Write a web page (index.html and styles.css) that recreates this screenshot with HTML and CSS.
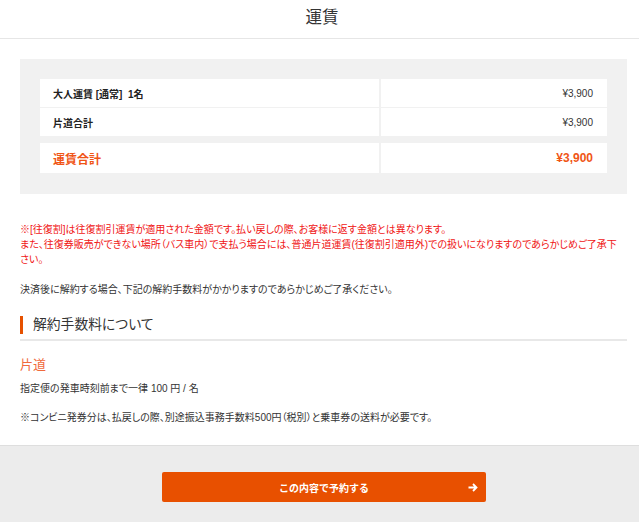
FILE: index.html
```html
<!DOCTYPE html>
<html lang="ja">
<head>
<meta charset="utf-8">
<title>運賃</title>
<link rel="stylesheet" href="styles.css">
</head>
<body>
<header class="page-header">
  <h1 class="page-title">運賃</h1>
</header>
<main class="content">
  <div class="fare-box">
    <div class="fare-group">
      <div class="fare-row">
        <div class="cell label">大人運賃 [通常]&nbsp; 1名</div>
        <div class="cell amount">¥3,900</div>
      </div>
      <div class="fare-row">
        <div class="cell label">片道合計</div>
        <div class="cell amount">¥3,900</div>
      </div>
    </div>
    <div class="fare-group total">
      <div class="fare-row">
        <div class="cell label">運賃合計</div>
        <div class="cell amount">¥3,900</div>
      </div>
    </div>
  </div>

  <p class="note warn">※[往復割]は往復割引運賃が適用された金額です。払い戻しの際、お客様に返す金額とは異なります。<br>また、往復券販売ができない場所（バス車内）で支払う場合には、普通片道運賃(往復割引適用外)での扱いになりますのであらかじめご了承下さい。</p>
  <p class="note">決済後に解約する場合、下記の解約手数料がかかりますのであらかじめご了承ください。</p>

  <section class="cancel">
    <h2 class="section-title">解約手数料について</h2>
    <h3 class="sub-title">片道</h3>
    <p class="note">指定便の発車時刻前まで一律 100 円 / 名</p>
    <p class="note gap">※コンビニ発券分は、払戻しの際、別途振込事務手数料500円（税別）と乗車券の送料が必要です。</p>
  </section>
</main>
<footer class="action-bar">
  <button class="reserve-btn" type="button">
    <span class="btn-label">この内容で予約する</span>
    <svg class="btn-arrow" width="10" height="9" viewBox="0 0 10 9" aria-hidden="true"><path d="M0.5 4.5H8.5M5 1L8.5 4.5L5 8" fill="none" stroke="#fff" stroke-width="1.8"/></svg>
  </button>
</footer>
</body>
</html>
```

FILE: styles.css
```css
* { box-sizing: border-box; }
html, body { margin: 0; padding: 0; }
body {
  width: 639px;
  height: 522px;
  overflow: hidden;
  background: #fff;
  color: #333;
  font-family: "Liberation Sans", "Noto Sans CJK JP", sans-serif;
  display: flex;
  flex-direction: column;
}
.page-header {
  height: 39px;
  border-bottom: 1px solid #e6e6e6;
  display: flex;
  align-items: center;
  justify-content: center;
  padding-left: 5px;
}
.page-title {
  margin: 0;
  font-size: 16.5px;
  font-weight: normal;
  line-height: 1;
  margin-top: -4px;
  color: #333;
}
.content {
  flex: 1;
  padding: 20px 12px 0 20px;
}
.fare-box {
  background: #f1f1f1;
  padding: 20px 20px 21px;
}
.fare-group {
  display: flex;
  flex-direction: column;
  gap: 1px;
}
.fare-group.total { margin-top: 7px; }
.fare-row {
  display: grid;
  grid-template-columns: 339px 1fr;
  column-gap: 2px;
  height: 28px;
}
.fare-group.total .fare-row { height: 30px; }
.cell {
  background: #fff;
  display: flex;
  align-items: center;
  font-size: 10px;
}
.cell.label {
  padding-left: 13px;
  font-weight: bold;
  color: #222;
}
.cell.amount {
  justify-content: flex-end;
  padding-right: 14px;
  color: #333;
}
.fare-group.total .cell {
  color: #f05516;
  font-size: 12px;
  font-weight: bold;
}
.note {
  margin: 0;
  font-size: 10px;
  line-height: 15px;
  color: #333;
  font-feature-settings: "palt";
}
.note.warn {
  color: #f01414;
  margin-top: 28px;
  margin-bottom: 15px;
  padding-right: 5px;
}
.note.gap { margin-top: 14px; }
.cancel { margin-top: 19px; }
.section-title {
  margin: 0;
  font-size: 13.8px;
  font-weight: normal;
  color: #333;
  border-left: 3px solid #e65100;
  padding-left: 10px;
  height: 18px;
  line-height: 18px;
  font-feature-settings: "palt";
}
.section-title::after {
  content: "";
  display: block;
  height: 2px;
  background: #e8e8e8;
  margin-left: -13px;
  margin-top: 5px;
}
.sub-title {
  margin: 23px 0 8px;
  font-size: 13px;
  font-weight: normal;
  line-height: 16px;
  color: #f06a3c;
}
.action-bar {
  height: 77px;
  background: #ececec;
  border-top: 1px solid #dedede;
  display: flex;
  justify-content: center;
  padding-top: 26px;
}
.reserve-btn {
  width: 324px;
  height: 30px;
  border: 0;
  border-radius: 2px;
  background: #e85000;
  color: #fff;
  position: relative;
  font-family: "Liberation Sans", "Noto Sans CJK JP", sans-serif;
  font-size: 10px;
  font-weight: bold;
  display: flex;
  align-items: center;
  justify-content: center;
  padding: 0;
  margin-left: 9px;
}
.btn-arrow {
  position: absolute;
  right: 8px;
  top: 11px;
}
```
